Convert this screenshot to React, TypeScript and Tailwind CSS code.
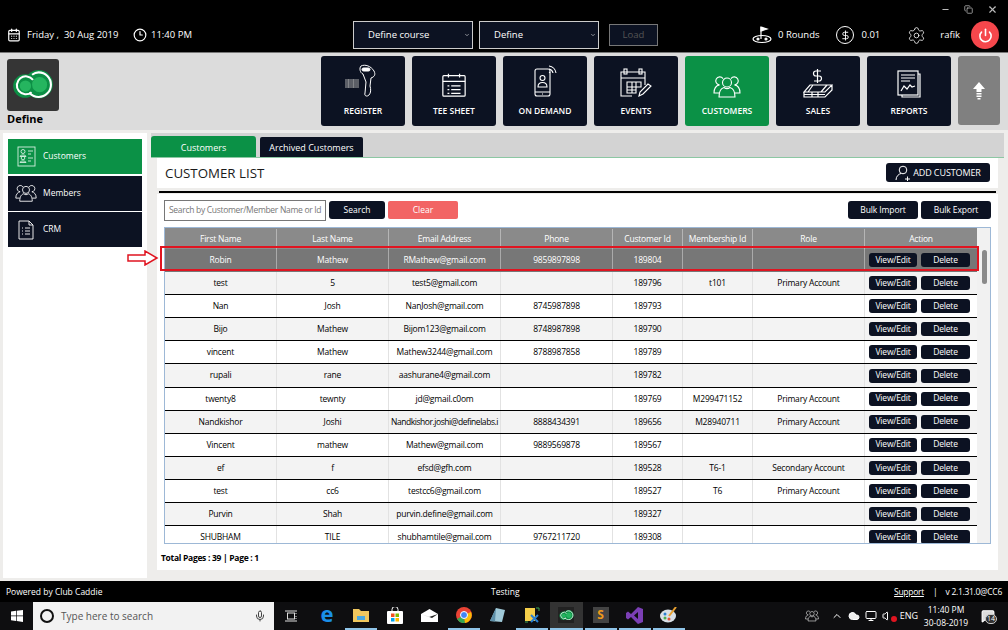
import React from 'react';
import { CalendarDays, Clock3, ChevronDown, Settings, Power, Minus, Copy, X, DollarSign, Mic, ChevronUp, Cloud, Monitor, Volume, MessageSquare } from 'lucide-react';

const LogoMark = ({ size = 44 }: { size?: number }) => (
  <svg width={size} height={size * 0.72} viewBox="0 0 44 32">
    <circle cx="13.500" cy="17" r="12.500" fill="#0c8f45" />
    <circle cx="28" cy="15" r="15" fill="#0c8f45" />
    <circle cx="29" cy="15.500" r="8" fill="#25b55f" />
    <circle cx="14" cy="17" r="6" fill="#25b55f" />
    <path d="M22 10.500a9.500 9.500 0 1 0-1.500 13" fill="none" stroke="#fff" strokeWidth="2.200" />
    <path d="M18 24c3 3 6 4.500 10 4.500a13 13 0 0 0 0-26c-3 0-5 1-7 2.500" fill="none" stroke="#fff" strokeWidth="2.200" />
  </svg>
);

const Group = ({ size = 30 }: { size?: number }) => (
  <svg width={size} height={size * 0.82} viewBox="0 0 28 23" fill="none" stroke="#fff" strokeWidth="1.100">
    <circle cx="14" cy="7.500" r="4.500" />
    <path d="M6 22c0-7 3-9 5-9.500 2 1.500 4 1.500 6 0 2 .5 5 2.500 5 9.500z" />
    <path d="M10 3.600a4 4 0 1 0-3.500 6.300c-3 .6-5.500 3-5.500 8.100h5" />
    <path d="M18 3.600a4 4 0 1 1 3.500 6.300c3 .6 5.500 3 5.500 8.100h-5" />
  </svg>
);

const Scanner = () => (
  <svg width="36" height="34" viewBox="0 0 36 34" fill="none" stroke="#fff" strokeWidth="1">
    <path d="M16 2c4-2 10 0 13 5 2 4 0 6-3 7l-1 8c1 3 1 7-1 9-2 2-5 1-4-2l1-11-3-8c-3-1-4-6-2-8z" />
    <rect x="17" y="4" width="8" height="3" rx="1.500" fill="#fff" />
    {[0, 2, 3, 5, 7, 8, 10, 12].map(x => <path key={x} d="M0 15v9" transform={`translate(${1 + x} 0)`} stroke="#aaa" />)}
  </svg>
);

const TeeSheet = () => (
  <svg width="26" height="26" viewBox="0 0 28 28" fill="none" stroke="#fff" strokeWidth="1.300">
    <rect x="2" y="4" width="24" height="22" rx="1" />
    <path d="M2 10h24M8 2v4M20 2v4M7 15h2M11 15h10M7 19h2M11 19h10M7 23h2M11 23h10" />
  </svg>
);

const OnDemand = () => (
  <svg width="24" height="34" viewBox="0 0 24 34" fill="none" stroke="#fff" strokeWidth="1.100">
    <rect x="2" y="5" width="15" height="27" rx="2" />
    <path d="M2 28h15M9 30h1" />
    <circle cx="9.500" cy="14" r="2.500" />
    <path d="M5 23c0-6 9-6 9 0z" />
    <path d="M16 5a5 5 0 0 1 4 4M16 2a8 8 0 0 1 7 7M16 8a2 2 0 0 1 1 1" />
  </svg>
);

const Events = () => (
  <svg width="32" height="30" viewBox="0 0 32 30" fill="none" stroke="#fff" strokeWidth="1.100">
    <path d="M12 28H1V4h24v13" />
    <path d="M1 10h24M7 14h14v5H7zM7 19h9v6H7zM12 14v11M16 14v5M7 22h9" />
    <rect x="4" y="1" width="3" height="5" />
    <rect x="19" y="1" width="3" height="5" />
    <path d="M19 28l1-4 8-8 3 2-8 8z" />
  </svg>
);

const Sales = () => (
  <svg width="30" height="30" viewBox="0 0 30 30" fill="none" stroke="#fff" strokeWidth="1.200">
    <path d="M18 3h-5a2.500 2.500 0 0 0 0 5h3a2.500 2.500 0 0 1 0 5h-5M14.500 1v14" />
    <path d="M7 17h22l-7 7H1zM1 24v5h21l7-7v-5M1 26.500h21M10 17l-5 7M24 17l-6 7M9 24v5M15 24v5" />
  </svg>
);

const Reports = () => (
  <svg width="24" height="28" viewBox="0 0 24 28" fill="none" stroke="#fff" strokeWidth="1.200">
    <path d="M21 4h2v23H5v-2" />
    <rect x="1" y="1" width="20" height="24" />
    <path d="M4 5h14M4 8h14M4 11h9" />
    <path d="M4 21l3-5 3 3 3-4 2 2 3-1" />
  </svg>
);

const CustomerForm = () => (
  <svg width="19" height="21" viewBox="0 0 19 21" fill="none" stroke="#d6efe0" strokeWidth="0.900">
    <rect x="1" y="1" width="17" height="19" />
    <circle cx="6" cy="5.500" r="2" />
    <path d="M3 10.500c0-2 6-2 6 0zM3 16.500c0-2 6-2 6 0z" />
    <circle cx="6" cy="12" r="1.800" />
    <path d="M11 5h5M11 8h3M11 12h5M11 15h3" />
  </svg>
);

const CrmDoc = () => (
  <svg width="16" height="20" viewBox="0 0 16 20" fill="none" stroke="#fff" strokeWidth="0.900">
    <path d="M1 1h10l4 4v14H1z" />
    <path d="M11 1v4h4" />
    <path d="M4 8h1M7 8h5M4 11h1M7 11h5M4 14h1M7 14h5" />
  </svg>
);

const AddCustomerIcon = () => (
  <svg width="16" height="16" viewBox="0 0 16 16" fill="none" stroke="#fff" strokeWidth="1">
    <circle cx="8" cy="5" r="3.800" />
    <path d="M1 15c0-4 3-6 5-6.500M10 14h5M12.500 11.500v5" />
  </svg>
);

const UpArrow = () => (
  <svg width="12" height="18" viewBox="0 0 12 18" fill="#fff">
    <path d="M6 0l6 7H8.500v3h-5V7H0z" />
    <path d="M3.500 11h5v1.500h-5zM3.500 13.500h5V15h-5zM4.500 16h3v1.500h-3z" />
  </svg>
);

const navItems = [
  { label: 'REGISTER', icon: <Scanner /> },
  { label: 'TEE SHEET', icon: <TeeSheet /> },
  { label: 'ON DEMAND', icon: <OnDemand /> },
  { label: 'EVENTS', icon: <Events /> },
  { label: 'CUSTOMERS', icon: <Group size={28} />, active: true },
  { label: 'SALES', icon: <Sales /> },
  { label: 'REPORTS', icon: <Reports /> },
];

const rows = [
  ['Robin', 'Mathew', 'RMathew@gmail.com', '9859897898', '189804', '', ''],
  ['test', '5', 'test5@gmail.com', '', '189796', 't101', 'Primary Account'],
  ['Nan', 'Josh', 'NanJosh@gmail.com', '8745987898', '189793', '', ''],
  ['Bijo', 'Mathew', 'Bijom123@gmail.com', '8748987898', '189790', '', ''],
  ['vincent', 'Mathew', 'Mathew3244@gmail.com', '8788987858', '189789', '', ''],
  ['rupali', 'rane', 'aashurane4@gmail.com', '', '189782', '', ''],
  ['twenty8', 'tewnty', 'jd@gmail.c0om', '', '189769', 'M299471152', 'Primary Account'],
  ['Nandkishor', 'Joshi', 'Nandkishor.joshi@definelabs.i', '8888434391', '189656', 'M28940711', 'Primary Account'],
  ['Vincent', 'mathew', 'Mathew@gmail.com', '9889569878', '189567', '', ''],
  ['ef', 'f', 'efsd@gfh.com', '', '189528', 'T6-1', 'Secondary Account'],
  ['test', 'cc6', 'testcc6@gmail.com', '', '189527', 'T6', 'Primary Account'],
  ['Purvin', 'Shah', 'purvin.define@gmail.com', '', '189327', '', ''],
  ['SHUBHAM', 'TILE', 'shubhamtile@gmail.com', '9767211720', '189308', '', ''],
];

const columns = 'grid grid-cols-[112px_112px_112px_112px_70px_70px_112px_113px]';
const headers = ['First Name', 'Last Name', 'Email Address', 'Phone', 'Customer Id', 'Membership Id', 'Role', 'Action'];

const DarkBtn = ({ children, className = '' }: { children: React.ReactNode; className?: string }) => (
  <div className={`bg-[#0c1222] text-white rounded-[3px] flex items-center justify-center ${className}`}>{children}</div>
);

const TaskIcon = ({ children, active, underline = true }: { children: React.ReactNode; active?: boolean; underline?: boolean }) => (
  <div className="w-[34.200px] h-[28px] flex items-center justify-center">
    <div className={`w-full h-full flex items-center justify-center border-b-2 mx-[1px] ${active ? 'bg-[#333] border-[#8fc4e8]' : underline ? 'border-[#8fc4e8]' : 'border-transparent'}`}>
      {children}
    </div>
  </div>
);

export default function App() {
  return (
    <div className="w-[1008px] h-[630px] overflow-hidden flex flex-col bg-[#eeedeb] font-['Open_Sans',sans-serif] text-black relative">
      {/* Top bar */}
      <div className="h-[53px] bg-black border-b border-[#777] text-white text-[9.500px] shrink-0">
        <div className="h-[18px] flex justify-end items-center gap-[14px] pr-[10px] pt-[1px] text-[#bbb]">
          <Minus size={9} strokeWidth={3} />
          <Copy size={9} />
          <X size={11} strokeWidth={2.500} />
        </div>
        <div className="h-[34px] flex items-center pl-[7px]">
          <CalendarDays size={14} />
          <span className="ml-[6px] w-[106px] whitespace-nowrap">Friday ,&nbsp; 30 Aug 2019</span>
          <Clock3 size={14} />
          <span className="ml-[4px] w-[202px]">11:40 PM</span>
          <div className="w-[120px] h-[28px] bg-[#0c1222] border border-[#ccc] flex items-center justify-between pl-[14px] pr-[2px]">
            Define course <ChevronDown size={6} />
          </div>
          <div className="ml-[6px] w-[120px] h-[28px] bg-[#0c1222] border border-[#ccc] flex items-center justify-between pl-[14px] pr-[2px]">
            Define <ChevronDown size={6} />
          </div>
          <div className="ml-[10px] w-[49px] h-[22px] bg-[#0c1222] border border-[#777] text-[#555] flex items-center justify-center">Load</div>
          <svg className="ml-[94px]" width="20" height="18" viewBox="0 0 20 18" fill="none" stroke="#fff" strokeWidth="1.200">
            <path d="M9 13V1" />
            <path d="M9 1l6 2-6 2z" fill="#fff" />
            <ellipse cx="10" cy="13" rx="9" ry="3.500" />
            <circle cx="6" cy="13" r="1" fill="#fff" />
            <circle cx="14" cy="13" r="1" fill="#fff" />
          </svg>
          <span className="ml-[6px]">0 Rounds</span>
          <div className="ml-[17px] w-[18px] h-[18px] rounded-full border-[1.500px] border-white flex items-center justify-center"><DollarSign size={11} strokeWidth={2} /></div>
          <span className="ml-[7px]">0.01</span>
          <Settings className="ml-[27px]" size={19} strokeWidth={1} />
          <span className="ml-[14px]">rafik</span>
          <div className="ml-[11px] w-[28px] h-[28px] rounded-full bg-[#f5474c] flex items-center justify-center"><Power size={15} strokeWidth={2.500} /></div>
        </div>
      </div>

      {/* Main nav */}
      <div className="h-[77px] bg-[#dcdcdc] flex shrink-0 relative">
        <div className="pl-[7px] pt-[6px] w-[321px]">
          <div className="w-[52px] h-[52px] bg-[#353535] rounded-[3px] flex items-center justify-center"><LogoMark size={42} /></div>
          <div className="text-[11px] font-bold leading-[15px]">Define</div>
        </div>
        <div className="flex gap-[7px] pt-[3px]">
          {navItems.map(n => (
            <div key={n.label} className={`w-[84px] h-[70px] rounded-[3px] flex flex-col items-center text-white ${n.active ? 'bg-[#0b9146]' : 'bg-[#0c1222]'}`}>
              <div className="h-[43px] flex items-end justify-center pb-[1px]">{n.icon}</div>
              <div className="mt-[6px] text-[8.500px] font-semibold leading-[12px]">{n.label}</div>
            </div>
          ))}
          <div className="w-[42px] h-[69px] rounded-[3px] bg-[#808080] flex items-center justify-center"><UpArrow /></div>
        </div>
      </div>

      {/* Body */}
      <div className="flex-1 flex pt-[3px] pl-[3px] min-h-0">
        <div className="w-[144px] h-[445px] bg-white px-[5px] pt-[6px] flex flex-col gap-[1.500px] text-white text-[8.500px] font-medium">
          <div className="h-[35px] bg-[#0b9146] flex items-center pl-[9px] gap-[7px]">
            <CustomerForm /><span>Customers</span>
          </div>
          <div className="h-[35px] bg-[#0c1222] flex items-center pl-[7px] gap-[6px]">
            <Group size={22} /><span>Members</span>
          </div>
          <div className="h-[35px] bg-[#0c1222] flex items-center pl-[10px] gap-[9px]">
            <CrmDoc /><span>CRM</span>
          </div>
        </div>
        <div className="ml-[4px] w-[853px]">
          <div className="h-[25px] bg-[#d3d3d3] border-b border-[#8cc7a3] flex items-end text-[9px]">
            <div className="w-[105px] h-[21px] pt-[2px] bg-[#0b9146] text-white rounded-t-[3px] flex items-center justify-center">Customers</div>
            <div className="ml-[4px] w-[103px] h-[20px] pt-[1px] bg-[#0c1222] text-white rounded-t-[2px] flex items-center justify-center">Archived Customers</div>
          </div>
          <div className="mx-[6px] w-[841px]">
            <div className="h-[30px] bg-white flex items-center justify-between pl-[8px] pr-[8px]">
              <span className="text-[13.300px] leading-none text-[#1a1a1a] pt-[1px]">CUSTOMER LIST</span>
              <DarkBtn className="w-[104px] h-[19px] mb-[1px] text-[9px] gap-[2px] tracking-[-0.1px]"><AddCustomerIcon />ADD CUSTOMER</DarkBtn>
            </div>
            <div className="h-[6px] bg-[#eeedeb] px-[2px] pt-[3px]"><div className="h-[2px] w-full bg-black" /></div>
            <div className="h-[376px] bg-white px-[7px] pt-[7px]">
              <div className="h-[19px] flex text-[8.500px]">
                <div className="w-[162px] h-[21px] -mt-[1px] border border-[#777] flex items-center pl-[4px] text-[#777] overflow-hidden whitespace-nowrap tracking-[-0.3px]">Search by Customer/Member Name or Id</div>
                <DarkBtn className="ml-[3px] w-[56px] h-[18px]">Search</DarkBtn>
                <div className="ml-[3px] w-[70px] h-[18px] bg-[#f26464] text-white rounded-[2px] flex items-center justify-center">Clear</div>
                <DarkBtn className="ml-auto w-[70px] h-[18px] tracking-[-0.1px]">Bulk Import</DarkBtn>
                <DarkBtn className="ml-[3px] w-[70px] h-[18px] tracking-[-0.1px]">Bulk Export</DarkBtn>
              </div>
              <div className="mt-[7px] w-[827px] h-[317px] border border-[#9db8d6] overflow-hidden relative text-[8.500px] tracking-[-0.2px]">
                <div className={`${columns} h-[21px] pt-[1px] bg-[#8a8a8a] text-white`}>
                  {headers.map(h => (
                    <div key={h} className="flex items-center justify-center border-r border-[#b5b5b5]">{h}</div>
                  ))}
                </div>
                {rows.map((r, i) => (
                  <div key={i} className={`${columns} h-[23.100px] border-b ${i === 0 ? 'bg-[#777] text-white border-[#777]' : i % 2 === 1 ? 'bg-[#f3f3f3] border-black' : 'bg-white border-black'}`}>
                    {r.map((c, j) => (
                      <div key={j} className={`block text-center leading-[22px] overflow-hidden whitespace-nowrap border-r ${c.length > 25 ? 'tracking-[-0.45px]' : ''} ${i === 0 ? 'border-[#aaa]' : 'border-[#e2e2e2]'}`}>{c}</div>
                    ))}
                    <div className="flex items-center pl-[4px] gap-[4px] text-white">
                      <DarkBtn className="w-[48px] h-[14px]">View/Edit</DarkBtn>
                      <DarkBtn className="w-[49px] h-[14px]">Delete</DarkBtn>
                    </div>
                  </div>
                ))}
                {/* scrollbar */}
                <div className="absolute right-0 top-0 bottom-0 w-[13px] bg-[#f1f1f1]">
                  <div className="absolute left-[5px] top-[22px] w-[5px] h-[34px] rounded-[3px] bg-[#8a8a8a]" />
                </div>
              </div>
              <div className="mt-[8px] text-[8.500px] font-bold -ml-[3px] tracking-[-0.3px]">Total Pages : 39 | Page : 1</div>
            </div>
          </div>
        </div>
      </div>

      {/* Footer */}
      <div className="h-[21px] bg-black text-white text-[8.500px] flex items-center shrink-0 pl-[6px] pr-[6px] pt-[1px] relative">
        <span className="w-[91px] whitespace-nowrap">Powered by Club Caddie</span>
        <span className="ml-[394px]">Testing</span>
        <span className="ml-auto underline tracking-[-0.3px]">Support</span>
        <span className="ml-[9px]">|</span>
        <span className="ml-[8px] tracking-[-0.3px]">v 2.1.31.0@CC6</span>
      </div>

      {/* Windows taskbar */}
      <div className="h-[28px] bg-[#0e0e10] text-white flex items-center shrink-0">
        <div className="w-[33px] flex justify-center">
          <svg width="12" height="12" viewBox="0 0 12 12" fill="#fff"><path d="M0 1.500l5-.7V5.500H0zM5.700.700L12 0v5.500H5.700zM0 6.200h5v4.700l-5-.7zM5.700 6.200H12V12l-6.300-.9z" /></svg>
        </div>
        <div className="w-[241px] h-[28px] bg-[#f2f2f2] flex items-center pl-[7px] text-[#555] text-[10px]">
          <div className="w-[14px] h-[14px] rounded-full border-2 border-[#111]" />
          <span className="ml-[7px] flex-1">Type here to search</span>
          <Mic size={12} className="mr-[8px] text-[#444]" />
        </div>
        <div className="w-[26px] ml-[4px] flex justify-center">
          <svg width="12" height="12" viewBox="0 0 12 12" fill="none" stroke="#ddd"><rect x="2.500" y="3" width="7" height="6" /><path d="M0 1h12M0 11h12M11 3v1M11 6v1M11 8v1" /></svg>
        </div>
        <div className="ml-[6px] flex items-center">
          <TaskIcon underline={false}><span className="text-[#1a8fe8] text-[22px] font-bold leading-none -mt-[4px]">e</span></TaskIcon>
          <TaskIcon>
            <svg width="16" height="14" viewBox="0 0 16 14"><path d="M0 1h6l2 2h8v11H0z" fill="#f0c75e" /><rect x="4" y="8" width="8" height="4" fill="#4aa8e0" /></svg>
          </TaskIcon>
          <TaskIcon underline={false}>
            <svg width="16" height="17" viewBox="0 0 16 17"><path d="M5 4V2.500a3 3 0 0 1 6 0V4" fill="none" stroke="#fff" /><rect y="4" width="16" height="13" rx="1" fill="#fff" /><rect x="4" y="6.500" width="3.500" height="3.500" fill="#f25022" /><rect x="8.500" y="6.500" width="3.500" height="3.500" fill="#7fba00" /><rect x="4" y="11" width="3.500" height="3.500" fill="#00a4ef" /><rect x="8.500" y="11" width="3.500" height="3.500" fill="#ffb900" /></svg>
          </TaskIcon>
          <TaskIcon underline={false}>
            <svg width="17" height="13" viewBox="0 0 17 13"><path d="M0 5l8.500-5L17 5v8H0z" fill="#fff" /><path d="M0 5l11 4 6-4-9 3z" fill="#222" /></svg>
          </TaskIcon>
          <TaskIcon>
            <svg width="16" height="16" viewBox="0 0 16 16"><circle cx="8" cy="8" r="8" fill="#e94335" /><path d="M8 8L1 12a8 8 0 0 0 8 4z" fill="#34a853" /><path d="M8 8l7-3a8 8 0 0 1-6 11z" fill="#fbbc05" /><circle cx="8" cy="8" r="3.500" fill="#4285f4" stroke="#fff" /></svg>
          </TaskIcon>
          <TaskIcon underline={false}>
            <svg width="16" height="16" viewBox="0 0 16 16"><path d="M6 1l9 2-3 12-12-1z" fill="#9fc9d8" /><path d="M6 1l-6 13 5 .5z" fill="#5d8fa8" /></svg>
          </TaskIcon>
          <TaskIcon>
            <svg width="16" height="16" viewBox="0 0 16 16"><rect x="1" y="1" width="10" height="13" fill="#f5cf4a" /><path d="M7 8l7 7M14 8l-7 7" stroke="#2a7fd0" strokeWidth="2" /><path d="M12 1h3v3M1 15h3" stroke="#3aa655" fill="none" /></svg>
          </TaskIcon>
          <TaskIcon active><div className="w-[16px] h-[16px] bg-[#222] flex items-center justify-center"><LogoMark size={15} /></div></TaskIcon>
          <TaskIcon>
            <div className="w-[16px] h-[16px] bg-[#444] flex items-center justify-center text-[#f09a1a] text-[12px] font-bold">S</div>
          </TaskIcon>
          <TaskIcon>
            <svg width="17" height="17" viewBox="0 0 17 17" fill="#7b3fb5"><path d="M12 0l5 2v13l-5 2-7-7-3 2.500L0 11V6l2-1.500 3 2.500zM12 5L8 8.500l4 3.500z" /></svg>
          </TaskIcon>
          <TaskIcon>
            <svg width="17" height="16" viewBox="0 0 17 16"><ellipse cx="8" cy="9" rx="8" ry="6.500" fill="#d8dfe6" /><circle cx="5" cy="7" r="1.500" fill="#2a7fd0" /><circle cx="5" cy="11" r="1.500" fill="#4caf50" /><circle cx="9" cy="12" r="1.500" fill="#e0503a" /><path d="M9 9l7-9" stroke="#e8a030" strokeWidth="2" /></svg>
          </TaskIcon>
        </div>
        <div className="ml-auto flex items-center pr-[9px] text-[9px]">
          <Group size={14} />
          <ChevronUp className="ml-[12px]" size={12} />
          <Cloud className="ml-[5px]" size={12} fill="#eee" />
          <Monitor className="ml-[5px]" size={12} />
          <div className="ml-[5px] relative">
            <Volume size={12} />
            <div className="absolute right-[-3px] bottom-0 w-[6px] h-[6px] rounded-full bg-[#e01420]" />
          </div>
          <span className="ml-[6px]">ENG</span>
          <div className="ml-[5px] w-[46px] text-center leading-[13px] text-[8.500px] whitespace-nowrap">11:40 PM<br />30-08-2019</div>
          <div className="ml-[12px] relative w-[18px]">
            <MessageSquare size={14} fill="#ddd" />
            <div className="absolute left-[4px] top-[5px] w-[12px] h-[10px] rounded-full bg-[#333] border border-[#ccc] text-[7px] leading-[8px] text-center">14</div>
          </div>
        </div>
      </div>

      {/* Annotation over the selected row */}
      <div className="absolute left-[160px] top-[246px] w-[819px] h-[25px] border-2 border-[#e01420] pointer-events-none" />
      <svg className="absolute left-[127px] top-[250px]" width="32" height="16" viewBox="0 0 32 16" fill="#fff" stroke="#e01420" strokeWidth="1.500">
        <path d="M1 5h17V1l12 7-12 7v-4H1z" />
      </svg>
    </div>
  );
}
